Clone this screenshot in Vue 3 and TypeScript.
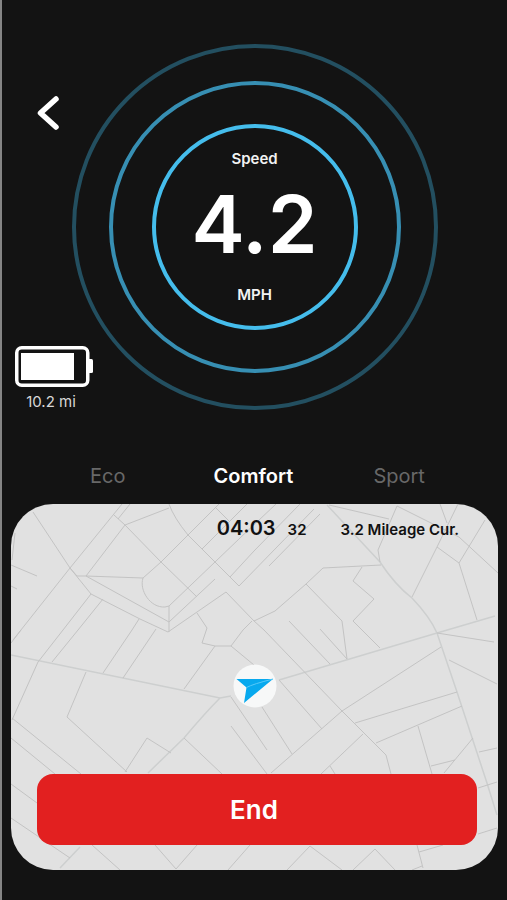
<script setup lang="ts">
import { ref } from 'vue'

const modes = ['Eco', 'Comfort', 'Sport']
const activeMode = ref('Comfort')

const rings = [
  { radius: 181, color: '#234f60' },
  { radius: 144, color: '#378fb3' },
  { radius: 101, color: '#45bdec' },
]

const streets = [
  'M33 512 70 568 91 594 140 619 168 632 226 592 254 621 275 611 306 584 323 568 381 565',
  'M122 504 70 568 13 640',
  'M130 504 118 519',
  'M114 515 125 525 161 562 197 597',
  'M169 508 125 525 86 576 143 578',
  'M70 568 77 576H86L169 622 215 579',
  'M169 504Q174 518 188 535L239 586 314 509',
  'M219 504 188 535 161 562 143 578C139 590 150 608 165 607L169 606 215 562 240 538 276 504',
  'M169 606V632M216 508 230 522M202 549 247 504',
  'M230 577 254 551 300 504M269 566 320 514',
  'M91 594 63 630 38 662 12 720',
  'M103 599 78 630 52 662M139 619 132 630 103 673M156 629 123 678',
  'M197 613 207 628 202 643 215 646H231L254 665M231 646 243 630 252 621M215 646 184 689',
  'M11 565 37 576M11 586 17 589M15 533 12 560M21 630 11 643',
  'M254 621 264 630 342 711 386 755 391 774',
  'M306 584 342 621 347 659M289 621 330 664M320 629 347 659',
  'M362 567 353 581 374 599 353 621 380 648',
  'M329 505 389 519M380 562 378 550 397 506 459 537 498 573',
  'M440 504 447 523M458 504 437 547 412 597',
  'M437 547 459 563 477 620M485 520 459 563',
  'M437 633 494 642M441 647 342 711 271 773M449 660 497 684',
  'M457 692 355 723M462 706 376 743M418 726 432 774M473 738 444 773',
  'M455 760 431 766M479 752 497 748M363 734 321 774M330 766 335 774',
  'M279 680 322 729M262 707 292 754M231 697 267 750M231 726 267 774',
  'M86 672 67 717 127 772M125 772 147 738 171 753M184 738 222 774',
  'M12 718 81 774M11 738 55 774',
  'M11 784 37 803M11 818 70 858M92 845 120 870M155 845 176 869 197 845M250 845 228 870',
  'M342 870 310 846 287 870M353 870 375 849 395 870M417 845 423 868',
  'M419 852 443 845M412 870 422 866M478 788 497 782M478 834 497 828',
]

const avenues = [
  'M327 505 380 562Q395 585 412 598 430 617 437 633L457 692 486 780 497 815',
  'M495 616 437 633 279 680',
  'M11 655 220 698 231 696M220 698Q205 713 184 738L148 773M80 847 60 868',
]
</script>

<template>
  <main class="ride">
    <section class="hero">
      <div class="side">
        <button class="back" type="button" aria-label="Back">
          <svg viewBox="0 0 24 36" width="24" height="36">
            <path d="M20 4 4.500 18 20 32" fill="none" stroke="#fff" stroke-width="5.500" stroke-linecap="round" stroke-linejoin="round" />
          </svg>
        </button>
        <div class="battery">
          <svg viewBox="0 0 78 41" width="78" height="41" aria-hidden="true">
            <rect x="1.750" y="1.750" width="71" height="37.500" rx="5" fill="none" stroke="#fff" stroke-width="3.500" />
            <rect x="6" y="7" width="53" height="27" fill="#fff" />
            <path d="M73 13h3.500a1.500 1.500 0 0 1 1.500 1.500v11a1.500 1.500 0 0 1-1.500 1.500H73z" fill="#fff" />
          </svg>
          <span>10.2 mi</span>
        </div>
      </div>
      <div class="dial">
        <svg class="rings" viewBox="0 0 368 368" aria-hidden="true">
          <circle v-for="ring in rings" :key="ring.radius" cx="184" cy="184" :r="ring.radius" fill="none" :stroke="ring.color" stroke-width="4" />
        </svg>
        <div class="readout">
          <span class="caption">Speed</span>
          <strong class="speed">4.2</strong>
          <span class="caption">MPH</span>
        </div>
      </div>
    </section>

    <nav class="modes" aria-label="Ride mode">
      <button
        v-for="mode in modes"
        :key="mode"
        type="button"
        class="mode"
        :class="{ active: mode === activeMode }"
        :aria-pressed="mode === activeMode"
        @click="activeMode = mode"
      >{{ mode }}</button>
    </nav>

    <section class="trip">
      <svg class="map" viewBox="11 504 487 366" preserveAspectRatio="xMidYMid slice" aria-hidden="true">
        <g fill="none">
          <path v-for="d in avenues" :key="d" :d="d" stroke="#cdcfcf" stroke-width="1.500" />
          <path v-for="d in streets" :key="d" :d="d" stroke="#c3c3c3" />
        </g>
      </svg>
      <div class="stats">
        <span class="time">04:03</span>
        <span class="seconds">32</span>
        <span class="mileage">3.2 Mileage Cur.</span>
      </div>
      <svg class="pointer" viewBox="0 0 44 44" width="44" height="44" aria-hidden="true">
        <circle cx="22" cy="22" r="21.500" fill="#f7f8f8" />
        <path d="M3.500 15H40L11 39 13.500 23.500z" fill="#08a9ee" />
        <path d="M13.500 23.500Q20 20 40 15" fill="none" stroke="#58c9f8" />
      </svg>
      <button class="end" type="button">End</button>
    </section>
  </main>
</template>

<style>
body {
  margin: 0;
  background: #131313;
}
</style>

<style scoped>
.ride {
  box-sizing: border-box;
  min-height: 100vh;
  padding: 43px 9px 30px;
  border-left: 2px solid #858585;
  background: #131313;
  color: #fff;
  font-family: Inter, "Liberation Sans", sans-serif;
}

button {
  padding: 0;
  border: 0;
  background: none;
  color: inherit;
  font: inherit;
  cursor: pointer;
}

svg {
  display: block;
}

.hero {
  display: grid;
  grid-template-columns: minmax(0, 1fr) minmax(0, 368px) minmax(0, 1fr);
}

.side {
  display: flex;
  flex-direction: column;
  justify-content: space-between;
  align-items: flex-start;
  padding: 52px 0 0 4px;
}

.back {
  margin-left: 21px;
}

.battery {
  display: flex;
  flex-direction: column;
  gap: 6px;
  width: 78px;
  font-size: 15px;
  line-height: 18px;
  color: #d8d8d8;
}

.battery span {
  width: 72px;
  text-align: center;
}

.dial {
  display: grid;
  place-items: center;
}

.rings,
.readout {
  grid-area: 1 / 1;
}

.rings {
  width: 100%;
}

.readout {
  display: flex;
  flex-direction: column;
  align-items: center;
}

.caption {
  font-size: 15px;
  line-height: 20px;
  font-weight: 600;
  color: #f2f2f2;
}

.speed {
  padding-bottom: 6px;
  font-size: 80px;
  line-height: 110px;
  font-weight: 600;
}

.modes {
  display: grid;
  grid-template-columns: repeat(3, 1fr);
  padding: 51px 26px 13px 24px;
}

.mode {
  font-size: 20px;
  line-height: 29px;
  color: #686868;
}

.mode.active {
  color: #fff;
  font-weight: 600;
}

.trip {
  position: relative;
  display: flex;
  flex-direction: column;
  align-items: center;
  padding: 10px 0 25px;
  border-radius: 42px;
  background: #e1e1e1;
  color: #111;
  overflow: hidden;
}

.map {
  position: absolute;
  inset: 0;
  width: 100%;
  height: 100%;
}

.stats,
.pointer,
.end {
  position: relative;
}

.stats {
  display: flex;
  align-items: baseline;
  align-self: flex-end;
  padding-right: 39px;
  font-size: 15px;
  line-height: 28px;
  font-weight: 600;
}

.time {
  font-size: 20px;
}

.seconds {
  margin: 0 34px 0 12px;
}

.pointer {
  margin: 120px 0 66px;
}

.end {
  align-self: stretch;
  margin: 0 21px 0 26px;
  padding-right: 6px;
  border-radius: 16px;
  background: #e22020;
  color: #fff;
  font-size: 26px;
  line-height: 71px;
  font-weight: 600;
}
</style>
